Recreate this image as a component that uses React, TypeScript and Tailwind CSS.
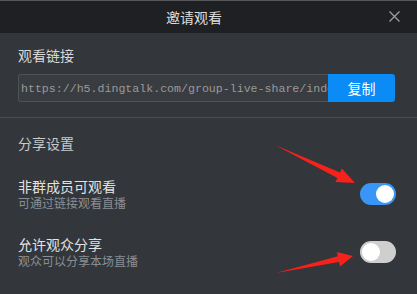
import React, { useState } from "react"

const Toggle = ({ on, onClick }: { on: boolean; onClick: () => void }) => (
    <button
        onClick={onClick}
        className={`relative w-[36px] h-[22px] rounded-full shrink-0 ${on ? "bg-[#3996f6]" : "bg-[#cfcfcf]"}`}
    >
        <span
            className={`absolute top-[2px] w-[18px] h-[18px] rounded-full bg-white ${on ? "right-[2px]" : "left-[2px]"}`}
        />
    </button>
)

const SettingRow = ({ title, desc, on, onClick }: { title: string; desc: string; on: boolean; onClick: () => void }) => (
    <div className="flex items-center justify-between">
        <div className="flex flex-col">
            <span className="text-[14px] leading-[18px] text-[#e2e2e2]">{title}</span>
            <span className="text-[12px] leading-[16px] text-[#8b8e93]">{desc}</span>
        </div>
        <Toggle on={on} onClick={onClick} />
    </div>
)

const App = () => {
    const [guests, setGuests] = useState(true)
    const [share, setShare] = useState(false)

    return (
        <div className="relative w-[417px] h-[294px] overflow-hidden bg-[#33363b] font-['Noto_Sans_CJK_SC',sans-serif]">
            <div className="h-px bg-[#55575a]" />
            {/* header */}
            <div className="relative h-[32px] flex items-center justify-center pr-[29px] bg-[#1f2023]">
                <span className="text-[14px] text-[#dedede]">邀请观看</span>
                <button className="absolute right-[17px] top-[10px] w-[11px] h-[11px]">
                    <svg width="11" height="11" viewBox="0 0 11 11">
                        <path d="M0.5 0.5 L10.5 10.5 M10.5 0.5 L0.5 10.5" stroke="#9b9b9b" strokeWidth="1.4" />
                    </svg>
                </button>
            </div>

            {/* link */}
            <div className="pl-[18px] pr-[22px] pt-[12px] pb-[15px]">
                <div className="text-[14px] leading-[20px] text-[#d8d8d8]">观看链接</div>
                <div className="flex mt-[9px] h-[28px]">
                    <input
                        readOnly
                        value="https://h5.dingtalk.com/group-live-share/index.html"
                        className="flex-1 min-w-0 h-full outline-none border border-r-0 border-[#4e5156] bg-[#393c41] rounded-l-[3px] pl-[2px] font-['Liberation_Mono',monospace] text-[11.6px] text-[#9a9a9a]"
                    />
                    <button className="w-[67px] bg-[#0a8bf6] rounded-r-[3px] text-[14px] text-white">复制</button>
                </div>
            </div>

            <div className="h-px bg-[#4a4d52]" />

            {/* settings */}
            <div className="pl-[18px] pr-[21px] pt-[15px]">
                <div className="text-[14px] leading-[20px] text-[#c9c9c9]">分享设置</div>
                <div className="mt-[24px]">
                    <SettingRow title="非群成员可观看" desc="可通过链接观看直播" on={guests} onClick={() => setGuests(!guests)} />
                </div>
                <div className="mt-[24px]">
                    <SettingRow title="允许观众分享" desc="观众可以分享本场直播" on={share} onClick={() => setShare(!share)} />
                </div>
            </div>

            {/* annotation arrows */}
            <svg className="absolute inset-0 pointer-events-none" width="417" height="294" viewBox="0 0 417 294">
                <polygon
                    points="275,145 340,172.6 341.9,168.5 355,183 335.5,182.1 337.4,178"
                    fill="#f5221c"
                />
                <polygon
                    points="276,273 337.8,256.3 336.8,251.9 353,256 340,266.5 339,262.1"
                    fill="#f5221c"
                />
            </svg>
        </div>
    )
}

export default App
